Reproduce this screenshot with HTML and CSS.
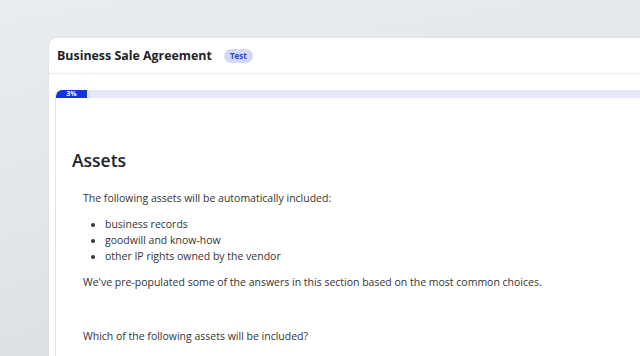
FILE: index.html
```html
<!DOCTYPE html>
<html>
<head>
<meta charset="utf-8">
<link rel="stylesheet" href="styles.css">
</head>
<body>
<div class="card">
  <div class="header">
    <span class="title">Business Sale Agreement</span>
    <span class="badge">Test</span>
  </div>
  <div class="body">
    <div class="panel">
      <div class="progress"><div class="fill" style="width:31px">3%</div></div>
      <h1 class="heading">Assets</h1>
      <div class="content">
        <p class="para">The following assets will be automatically included:</p>
        <ul class="list">
          <li>business records</li>
          <li>goodwill and know-how</li>
          <li>other IP rights owned by the vendor</li>
        </ul>
        <p class="para">We've pre-populated some of the answers in this section based on the most common choices.</p>
        <p class="para question">Which of the following assets will be included?</p>
      </div>
    </div>
  </div>
</div>
</body>
</html>
```
FILE: styles.css
```css
html, body {
  margin: 0;
  height: 100%;
  overflow: hidden;
}
body {
  background: linear-gradient(170deg, #e8edf1 0%, #e2e6e9 50%, #d9dcdd 100%);
  font-family: "Open Sans", "Liberation Sans", sans-serif;
  color: #2b2b2b;
}
.card {
  margin: 38px 0 0 49px;
  height: calc(100vh - 38px);
  background: #fff;
  border-radius: 8px 0 0 0;
  box-shadow: 0 0 3px rgba(0,0,0,0.06);
  display: flex;
  flex-direction: column;
}
.header {
  height: 35px;
  flex: none;
  border-bottom: 1px solid #ececec;
  display: flex;
  align-items: center;
  padding-left: 8px;
  gap: 12px;
}
.title {
  font-size: 12.4px;
  font-weight: 700;
  color: #23232a;
}
.badge {
  background: #d2d9fa;
  color: #2b44d6;
  font-size: 8px;
  font-weight: 700;
  padding: 2px 6px;
  border-radius: 8px;
  line-height: 10px;
}
.body {
  flex: 1;
  display: flex;
  padding: 16px 0 0 6px;
  min-height: 0;
}
.panel {
  flex: 1;
  border-left: 1px solid #e6e6e6;
  border-top-left-radius: 6px;
  overflow: hidden;
}
.progress {
  height: 8px;
  background: #e5e8fb;
  border-radius: 6px 0 0 0;
  display: flex;
}
.fill {
  background: #1436d9;
  border-radius: 6px 0 0 0;
  color: #fff;
  font-size: 7px;
  font-weight: 700;
  line-height: 8px;
  text-align: center;
}
.heading {
  margin: 52px 0 0 16px;
  font-size: 17.5px;
  line-height: 20px;
  font-weight: 600;
  color: #222228;
}
.content {
  padding-left: 27px;
  margin-top: 20px;
  font-size: 10.5px;
  line-height: 16px;
  color: #333;
}
.para {
  margin: 0 0 10px 0;
}
.list {
  margin: 0 0 10px 0;
  padding-left: 22px;
}
.question {
  margin-top: 38px;
}
```
